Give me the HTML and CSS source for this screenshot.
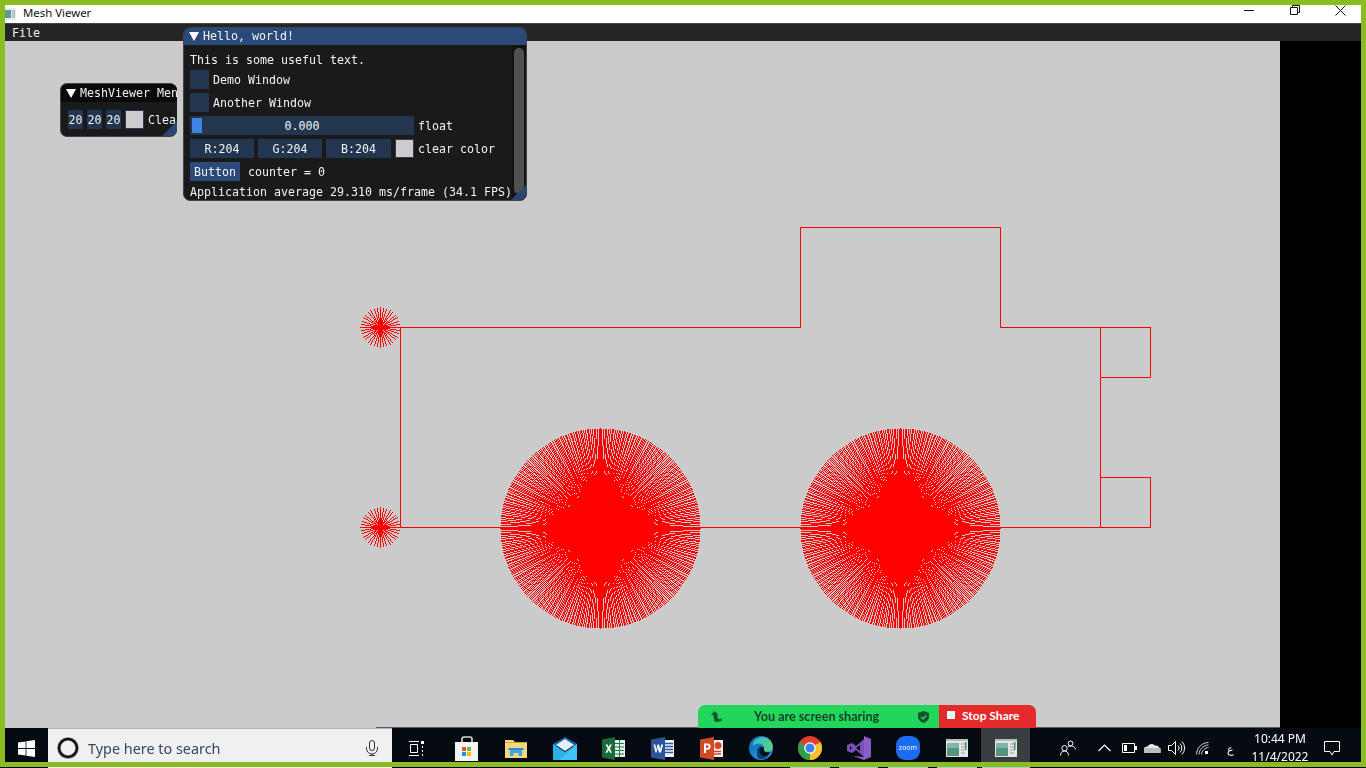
FILE: index.html
```html
<!DOCTYPE html>
<html lang="en">
<head>
<meta charset="utf-8">
<title>Mesh Viewer</title>
<link rel="stylesheet" href="styles.css">
</head>
<body>
<div class="frame">
  <div class="screen">
    <header class="titlebar">
      <svg class="app-icon" width="11" height="12" viewBox="0 0 11 12"><rect width="11" height="12" fill="#e8ecec"/><rect x="0" y="2" width="6" height="8" fill="#5f9a94"/><rect x="7" y="2" width="3" height="8" fill="#b9c4c4"/></svg>
      <span class="title-text">Mesh Viewer</span>
      <div class="win-controls">
        <svg class="ctl ctl-min" width="10" height="10" viewBox="0 0 10 10"><path d="M0 5.5H10" stroke="#111" fill="none"/></svg>
        <svg class="ctl ctl-max" width="10" height="10" viewBox="0 0 10 10"><path d="M.5 2.5h7v7h-7zM2.5 2.5v-2h7v7h-2" stroke="#111" fill="none"/></svg>
        <svg class="ctl ctl-close" width="11" height="11" viewBox="0 0 11 11"><path d="M.5 .5l10 10M10.5 .5l-10 10" stroke="#111" fill="none"/></svg>
      </div>
    </header>
    <nav class="menubar"><span>File</span></nav>
    <main class="viewport">
      <canvas id="scene" width="1275" height="687"></canvas>
      <div class="black-side"></div>
    </main>
    <footer class="taskbar">
      <div class="tile start">
        <svg width="17" height="17" viewBox="0 0 17 17"><path fill="#fff" d="M0 2.400l7.600-1v6.700H0zM8.400 1.300L17 0v8.100H8.400zM0 8.900h7.600v6.700l-7.600-1zM8.400 8.900H17V17l-8.600-1.300z"/></svg>
      </div>
      <div class="search">
        <svg class="cortana" width="22" height="22" viewBox="0 0 22 22"><circle cx="11" cy="11" r="9" fill="none" stroke="#9a9a9a" stroke-width="3.600"/><circle cx="11" cy="11" r="9" fill="none" stroke="#111" stroke-width="2.400"/></svg>
        <span class="search-text">Type here to search</span>
        <svg class="mic" width="12" height="16" viewBox="0 0 12 16"><path d="M3.500 3a2.500 2.500 0 015 0v5a2.500 2.500 0 01-5 0zM.5 7v1.500a5.500 5.500 0 0011 0V7M6 14v1.500M3 15.500h6" fill="none" stroke="#333"/></svg>
      </div>
      <div class="tile taskview">
        <svg width="15" height="15" viewBox="0 0 15 15"><path d="M0 .5h10M0 14.500h10M1.500 3.500h7v8h-7z" fill="none" stroke="#fff"/><path d="M12 0h3v3h-3z" fill="#fff"/><path d="M13.500 5v2M13.500 9v2M13.500 13v2" stroke="#fff" fill="none"/></svg>
      </div>
      <div class="tile">
        <svg width="24" height="25" viewBox="0 0 24 25"><path d="M7 7V3a2 2 0 012-2h6a2 2 0 012 2v4" fill="none" stroke="#d8d8d8" stroke-width="1.600"/><rect y="6" width="23" height="19" fill="#f4f4f4"/><rect x="7" y="11" width="4" height="4" fill="#e8512a"/><rect x="12" y="11" width="4" height="4" fill="#7cb82a"/><rect x="7" y="16" width="4" height="4" fill="#0a9bea"/><rect x="12" y="16" width="4" height="4" fill="#ffb900"/></svg>
      </div>
      <div class="tile">
        <svg width="22" height="19" viewBox="0 0 22 19"><path d="M0 1h8l2 2h12v16H0z" fill="#f5d77c"/><path d="M0 3h22v1H0z" fill="#c9a64a"/><path d="M5 17V10h12v7h-3.500v-3h-5v3z" fill="#3ba9e8"/><path d="M3.500 9h15v2h-15z" fill="#2c8fd0"/></svg>
      </div>
      <div class="tile">
        <svg width="24" height="23" viewBox="0 0 24 23"><path d="M0 7L12 0l12 7v2H0z" fill="#0f6cbd"/><path d="M3 8L12 2l9 6-9 6z" fill="#e8eef2"/><path d="M0 7l12 8 12-8v16H0z" fill="#29b0ee"/><path d="M24 7v16H6z" fill="#40c4f4"/></svg>
      </div>
      <div class="tile">
        <svg width="23" height="23" viewBox="0 0 23 23"><rect x="12" y="3" width="11" height="17" fill="#e8f2ec"/><path d="M13 6.500h9M13 10h9M13 13.500h9M13 17h9M17.500 3v17" stroke="#1f7a46" fill="none"/><path d="M0 2.500L13 0v23L0 20.500z" fill="#1a6b3c"/><path d="M3.500 7.500h2l1.200 2.600 1.300-2.600h2l-2.300 4 2.300 4.200h-2l-1.300-2.700-1.300 2.700h-2l2.300-4.200z" fill="#fff"/></svg>
      </div>
      <div class="tile">
        <svg width="23" height="23" viewBox="0 0 23 23"><rect x="11" y="3" width="12" height="17" fill="#f0f3fa"/><path d="M14 6.500h8M14 9.500h8M14 12.500h8M14 15.500h8" stroke="#2a5699" stroke-width="1.300" fill="none"/><path d="M0 2.500L14 0v23L0 20.500z" fill="#2a5699"/><path d="M2.500 7.500h1.800l1 5 1.200-5h1.500l1.200 5 1-5h1.800l-2 8H8l-1.300-5-1.200 5H4.500z" fill="#fff"/></svg>
      </div>
      <div class="tile">
        <svg width="23" height="23" viewBox="0 0 23 23"><rect x="11" y="3" width="12" height="17" fill="#f8eeea"/><path d="M14 14.500h7M14 17h7" stroke="#d04a26" stroke-width="1.300" fill="none"/><circle cx="18" cy="8.500" r="3.500" fill="#d04a26"/><path d="M0 2.500L14 0v23L0 20.500z" fill="#d04a26"/><path d="M4 6.500h3.500a2.800 2.800 0 010 6.200H6V16H4zM6 8.200v2.800h1.200a1.400 1.400 0 000-2.800z" fill="#fff"/></svg>
      </div>
      <div class="tile">
        <svg width="24" height="24" viewBox="0 0 24 24"><defs><linearGradient id="edgeA" x1="0" y1="0" x2="1" y2="1"><stop offset="0" stop-color="#0c64b4"/><stop offset="1" stop-color="#2ba7e8"/></linearGradient><linearGradient id="edgeB" x1="0" y1="0" x2="1" y2="1"><stop offset="0" stop-color="#2fb9d8"/><stop offset="1" stop-color="#64d36a"/></linearGradient></defs><circle cx="12" cy="12" r="12" fill="url(#edgeA)"/><path d="M4 6.500C7 1 16-1.500 21 4c3.500 4 3.500 9.500 0 11-3 1-6 .500-6-1.500 1-3-1.500-6-5.500-6C7.500 7.500 5.500 8.500 4 10z" fill="url(#edgeB)"/><path d="M8 15c0-4 4-6 6-4 1 1 0 3 1 4 2 1.500 4 2 6.500 1-2 5-7 8-11 7-3-1-2.500-5-2.500-8z" fill="#0a3f7a"/><path d="M10.500 14c0-2 2-3.500 4-3 .5 1-.2 3 .5 4 1.500 1.500 4 2 6.500 1-2 3-5 5-8 4-2.500-1.500-3-4-3-6z" fill="#0b0f16"/></svg>
      </div>
      <div class="tile">
        <svg width="24" height="24" viewBox="0 0 24 24"><circle cx="12" cy="12" r="12" fill="#e33b2e"/><path d="M12 12L22.400 6A12 12 0 0112 24z" fill="#fbc02d"/><path d="M12 12L12 24A12 12 0 011.600 6z" fill="#2fa04a"/><circle cx="12" cy="12" r="5.800" fill="#fff"/><circle cx="12" cy="12" r="4.500" fill="#3f81ea"/></svg>
      </div>
      <div class="tile">
        <svg width="24" height="24" viewBox="0 0 24 24"><path d="M17 0l7 3v18l-7 3-11-4 11 1V3z" fill="#8a5cc4"/><path d="M17 3v18l-8-7-4 3-5-2V9l5-2 4 3zM3 10v4l2-2zM9 12l4 3V9z" fill="#7d4fba" fill-rule="evenodd"/></svg>
      </div>
      <div class="tile">
        <svg width="24" height="24" viewBox="0 0 24 24"><rect width="24" height="24" rx="9" fill="#1a6cf0"/><text x="12" y="14" class="zoom-word" text-anchor="middle">zoom</text></svg>
      </div>
      <div class="tile">
        <svg class="app-tile" width="22" height="18" viewBox="0 0 22 18"><rect width="22" height="18" fill="#e4e6e6"/><rect width="22" height="2" fill="#b8bcbc"/><rect x="1" y="4" width="12" height="13" fill="#56927e"/><rect x="1" y="4" width="12" height="5" fill="#7fb4b0"/><path d="M15 5h4M15 8h4M15 11h4M15 14h4" stroke="#9a9e9e"/><rect x="19" y="3" width="1.500" height="8" fill="#3a9a5a"/></svg>
      </div>
      <div class="tile active">
        <svg class="app-tile" width="22" height="18" viewBox="0 0 22 18"><rect width="22" height="18" fill="#e4e6e6"/><rect width="22" height="2" fill="#b8bcbc"/><rect x="1" y="4" width="12" height="13" fill="#56927e"/><rect x="1" y="4" width="12" height="5" fill="#7fb4b0"/><path d="M15 5h4M15 8h4M15 11h4M15 14h4" stroke="#9a9e9e"/><rect x="19" y="3" width="1.500" height="8" fill="#3a9a5a"/></svg>
      </div>
      <div class="tray">
        <div class="t-people"><svg width="16" height="16" viewBox="0 0 16 16"><path d="M10.500 1a2.400 2.400 0 110 4.800 2.400 2.400 0 010-4.800zM4.500 5.500a2.700 2.700 0 110 5.400 2.700 2.700 0 010-5.400zM.5 15.500c0-6 8-6 8 0M8 6.500c3-1 7-.5 7.500 3" fill="none" stroke="#fff"/></svg></div>
        <div class="t-chev"><svg width="13" height="8" viewBox="0 0 13 8"><path d="M.5 7L6.500 1l6 6" fill="none" stroke="#fff" stroke-width="1.200"/></svg></div>
        <div class="t-batt"><svg width="15" height="10" viewBox="0 0 15 10"><path d="M.5 .5h12v9H.5z" fill="none" stroke="#fff"/><rect x="2" y="2" width="3" height="6" fill="#fff"/><rect x="13" y="3" width="2" height="4" fill="#fff"/></svg></div>
        <div class="t-cloud"><svg width="17" height="10" viewBox="0 0 17 10"><path d="M1 10a3 3 0 01-.5-5.500C1.500 4 2.500 3.500 3.500 3.500 5 .5 9 0 11 2.500c3-.5 6 2.500 5.500 7.500z" fill="#e8e8e8"/><path d="M1 10a3 3 0 010-5h15.500c.5 2 .3 3.500 0 5z" fill="#bcbcbc"/></svg></div>
        <div class="t-vol"><svg width="17" height="14" viewBox="0 0 17 14"><path d="M.5 4.500h3l4-4v13l-4-4h-3zM10 4.500a3.500 3.500 0 010 5M12 2.500a6.500 6.500 0 010 9M14 .5a9.500 9.500 0 010 13" fill="none" stroke="#fff"/></svg></div>
        <div class="t-wifi"><svg width="13" height="13" viewBox="0 0 13 13"><path d="M.5 12.500C.5 6 6 .5 12.500 .5M3 12.500C3 8 7 3 12.500 3M5.500 12.500C5.500 9 9 5.500 12.500 5.500" fill="none" stroke="#cfcfcf"/><rect x="9" y="9" width="3" height="3" fill="#fff"/></svg></div>
        <div class="t-lang">ع</div>
        <div class="t-clock"><span>10:44 PM</span><span>11/4/2022</span></div>
        <div class="t-note"><svg width="16" height="15" viewBox="0 0 16 15"><path d="M.5 .5h15v10h-5.500l-2 3.500-2-3.500H.5z" fill="none" stroke="#fff"/></svg></div>
      </div>
    </footer>
    <div class="frame-bottom"></div>
  </div>
  <div class="strip">
    <i class="s-d s-48"></i><i class="s-w s-344"></i><i class="s-d s-398"></i><i class="s-t s-40"></i><i class="s-d s-9"></i><i class="s-t s-39"></i><i class="s-d s-10"></i><i class="s-t s-40"></i><i class="s-d s-9"></i><i class="s-t s-40"></i><i class="s-d s-5"></i><i class="s-t s-48"></i>
  </div>

  <div class="taskbar-edge"></div>

  <section class="imgui mesh-win">
    <div class="im-title dark"><svg class="arrow" width="10" height="9" viewBox="0 0 10 9"><path d="M0 0h10L5 9z" fill="#fff"/></svg><span>MeshViewer Menu</span></div>
    <div class="im-body mesh-body">
      <span class="box num">20</span><span class="box num">20</span><span class="box num">20</span>
      <span class="swatch"></span><span class="clip-label">Clear</span>
    </div>
    <span class="grip"></span>
  </section>

  <section class="imgui hello-win">
    <div class="im-title"><svg class="arrow" width="10" height="9" viewBox="0 0 10 9"><path d="M0 0h10L5 9z" fill="#fff"/></svg><span>Hello, world!</span></div>
    <div class="hello-wrap">
      <div class="im-body hello-body">
        <div class="line">This is some useful text.</div>
        <div class="row"><span class="check"></span><span>Demo Window</span></div>
        <div class="row"><span class="check"></span><span>Another Window</span></div>
        <div class="row"><span class="slider"><span class="grab"></span><span>0.000</span></span><span>float</span></div>
        <div class="row"><span class="rgb">R:204</span><span class="rgb">G:204</span><span class="rgb wide">B:204</span><span class="swatch"></span><span>clear color</span></div>
        <div class="row gap8"><span class="btn">Button</span><span>counter = 0</span></div>
        <div class="line nowrap">Application average 29.310 ms/frame (34.1 FPS)</div>
      </div>
      <div class="scroll"><span class="thumb"></span></div>
    </div>
    <span class="grip"></span>
  </section>

  <aside class="share">
    <div class="share-green">
      <svg width="11" height="11" viewBox="0 0 11 11"><path d="M4 0L0 3.500h2.500V9c0 1 1 2 2 2H10V8.500H6.500V3.500H8z" fill="#0f5a2c" transform="rotate(-12 5 5)"/></svg>
      <span class="share-text">You are screen sharing</span>
      <svg width="11" height="12" viewBox="0 0 11 12"><path d="M5.500 0L11 2v4c0 3-2.500 5-5.500 6C2.500 11 0 9 0 6V2z" fill="#17512c"/><path d="M3 6l2 2 3.300-3.500" fill="none" stroke="#22d65c" stroke-width="1.300"/></svg>
    </div>
    <div class="share-red"><span class="stop-square"></span><span class="stop-text">Stop Share</span></div>
  </aside>
</div>
<script src="scene.js"></script>
</body>
</html>
```

FILE: styles.css
```css
* { box-sizing: border-box; }
html, body { margin: 0; padding: 0; }
body { width: 1366px; height: 768px; overflow: hidden; background: #000; }

.frame { position: relative; width: 1366px; height: 768px; display: flex; flex-direction: column; background: #8bbd23; font-family: "Noto Sans", sans-serif; }
.screen { flex: 1; min-height: 0; display: flex; flex-direction: column; padding: 5px 5px 0; }

.titlebar { height: 19px; flex: none; display: flex; align-items: center; background: #fff; border-bottom: 1px solid #444; }
.app-icon { margin-right: 7px; }
.title-text { font-size: 11.4px; color: #111; line-height: 16px; padding-bottom: 2px; }
.win-controls { margin-left: auto; display: flex; align-items: flex-start; height: 18px; }
.ctl-min { margin-right: 36px; }
.ctl-max { margin-right: 35px; }
.ctl-close { margin-right: 15px; }

.menubar { height: 17px; flex: none; background: #252525; color: #f0f0f0; font: 11.63px/19px "DejaVu Sans Mono", monospace; padding-left: 7px; }

.viewport { height: 687px; flex: none; display: flex; }
#scene { display: block; width: 1275px; height: 687px; background: #cbcbcb; flex: none; }
.black-side { flex: 1; background: #000; }

.taskbar { height: 34px; flex: none; display: flex; background: #060b12; }
.tile { width: 49px; height: 34px; flex: none; display: flex; align-items: center; justify-content: center; padding-top: 6px; }
.tile.start { width: 43px; }
.tile.taskview { width: 50px; padding-right: 2px; }
.tile.active { background: #3a3d41; }
.search { width: 344px; height: 34px; flex: none; display: flex; align-items: center; background: #f0f0f0; border-top: 1px solid #b4b4b4; padding: 5px 14px 0 9px; }
.search-text { font-size: 14.4px; color: #33475e; margin-left: 9px; }
.mic { margin-left: auto; }
.zoom-word { font: 7px "Noto Sans", sans-serif; fill: #fff; }

.tray { flex: 1; display: flex; align-items: center; height: 34px; color: #fff; padding-left: 18px; }
.tray > div { flex: none; display: flex; align-items: center; justify-content: center; height: 34px; padding-top: 6px; }
.t-people { width: 40px; }
.t-chev { width: 32px; }
.t-batt { width: 18px; }
.t-cloud { width: 28px; }
.t-vol { width: 20px; }
.t-wifi { width: 32px; }
.t-lang { width: 24px; font-size: 11px; }
.tray > .t-clock { width: 76px; flex-direction: column; font-size: 12px; line-height: 18px; }
.t-note { width: 28px; }

.frame-bottom { height: 5px; flex: none; }
.strip { height: 1px; flex: none; display: flex; background: #000; }
.strip i { display: block; height: 1px; flex: none; }
.s-d { background: #000; }
.s-w { background: #fff; }
.s-t { background: #9fd0d8; }
.s-5 { width: 5px; } .s-9 { width: 9px; } .s-10 { width: 10px; } .s-39 { width: 39px; } .s-40 { width: 40px; }
.s-48 { width: 48px; } .s-344 { width: 344px; } .s-398 { width: 398px; }

.taskbar-edge { position: absolute; left: 376px; top: 727px; width: 904px; height: 1px; background: #5a5a5a; }

.imgui { position: absolute; overflow: hidden; display: flex; flex-direction: column; background: #1a1a1a; border: 1px solid #43434f; border-radius: 7px; color: #f2f2f2; font: 11.63px/13px "DejaVu Sans Mono", monospace; white-space: pre; }
.hello-win { left: 183px; top: 27px; width: 344px; height: 174px; }
.mesh-win { left: 60px; top: 83px; width: 117px; height: 54px; border-right: 0; }
.im-title { flex: none; height: 17px; display: flex; align-items: center; background: #2a4a7a; padding-left: 5px; gap: 4px; }
.im-title.dark { height: 18px; background: #0a0a0a; overflow: hidden; }
.arrow { flex: none; }
.hello-wrap { flex: 1; display: flex; min-height: 0; }
.im-body { flex: 1; min-width: 0; overflow: hidden; }
.hello-body { display: flex; flex-direction: column; gap: 4px; padding: 8px 0 0 6px; }
.line { height: 13px; padding-top: 1px; box-sizing: content-box; margin-bottom: -1px; }
.nowrap { overflow: hidden; }
.row { display: flex; align-items: center; gap: 4px; height: 19px; }
.row.gap8 { gap: 8px; }
.row > span:last-child { padding-top: 2px; }
.check { width: 19px; height: 19px; background: #233650; }
.slider { position: relative; width: 224px; height: 19px; display: flex; align-items: center; justify-content: center; background: #233650; padding-top: 2px; }
.grab { position: absolute; left: 2px; top: 2px; width: 10px; height: 15px; background: #3d85e0; }
.rgb { width: 64px; height: 19px; background: #233650; display: flex; align-items: center; justify-content: center; padding-top: 2px; }
.rgb.wide { width: 65px; }
.swatch { flex: none; width: 19px; height: 19px; background: #cccccc; border: 1px solid #2c3c55; }
.btn { width: 50px; height: 19px; background: #2b4a78; display: flex; align-items: center; justify-content: center; padding-top: 2px; }
.scroll { flex: none; width: 14px; background: #131313; padding: 3px 2px 6px; display: flex; }
.thumb { flex: 1; background: #505050; border-radius: 5px; }
.mesh-body { flex: none; display: flex; align-items: center; gap: 4px; padding: 8px 0 0 7px; height: 27px; }
.box.num { flex: none; width: 15px; height: 19px; background: #233650; display: flex; align-items: center; justify-content: center; padding-top: 2px; }
.clip-label { flex: none; padding-top: 2px; }
.grip { position: absolute; right: 0; bottom: 0; width: 15px; height: 15px; background: #2a466f; clip-path: polygon(100% 0, 100% 100%, 0 100%); }

.share { position: absolute; left: 698px; top: 705px; width: 338px; height: 23px; display: flex; border-radius: 7px 7px 0 0; overflow: hidden; font-size: 12px; font-weight: 700; font-family: "Lato", sans-serif; }
.share-green { width: 241px; flex: none; display: flex; align-items: center; background: #22d65c; padding: 0 10px 0 13px; }
.share-text { color: #1b3b2a; font-size: 12.6px; margin-left: 32px; margin-right: auto; }
.share-red { flex: 1; display: flex; align-items: center; background: #e52a2a; color: #fff; padding-left: 8px; gap: 7px; }
.stop-text { padding-bottom: 2px; }
.stop-square { width: 8px; height: 8px; background: #e6fbff; margin-top: -4px; }
```

FILE: scene.js
```js
(function () {
  var canvas = document.getElementById('scene');
  var ctx = canvas.getContext('2d');
  var OX = 5, OY = 41;
  ctx.fillStyle = '#ff0000';

  function plot(x, y) { ctx.fillRect(x - OX, y - OY, 1, 1); }

  // Bresenham line between integer pixels.
  function line(x0, y0, x1, y1) {
    var dx = Math.abs(x1 - x0), dy = Math.abs(y1 - y0);
    var sx = x0 < x1 ? 1 : -1, sy = y0 < y1 ? 1 : -1, err = dx - dy;
    while (true) {
      plot(x0, y0);
      if (x0 === x1 && y0 === y1) break;
      var e = 2 * err;
      if (e > -dy) { err -= dy; x0 += sx; }
      if (e < dx) { err += dx; y0 += sy; }
    }
  }

  // Truncate toward zero, but keep exact axis values such as -100.
  function whole(v) { return Math.trunc(v + (v < 0 ? -1e-9 : 1e-9)); }

  function wheel(cx, cy, r, n) {
    for (var i = 0; i < n; i++) {
      var a = i * 2 * Math.PI / n;
      line(cx, cy, cx + whole(r * Math.cos(a)), cy + whole(r * Math.sin(a)));
    }
  }

  [
    [400, 327, 800, 327], [800, 227, 800, 327], [800, 227, 1000, 227], [1000, 227, 1000, 327],
    [1000, 327, 1150, 327], [400, 327, 400, 527], [400, 527, 1150, 527], [1100, 327, 1100, 527],
    [1150, 327, 1150, 377], [1100, 377, 1150, 377], [1100, 477, 1150, 477], [1150, 477, 1150, 527]
  ].forEach(function (s) { line(s[0], s[1], s[2], s[3]); });

  wheel(600, 528, 100, 360);
  wheel(900, 528, 100, 360);
  wheel(380, 327, 20, 36);
  wheel(380, 527, 20, 36);
})();
```
